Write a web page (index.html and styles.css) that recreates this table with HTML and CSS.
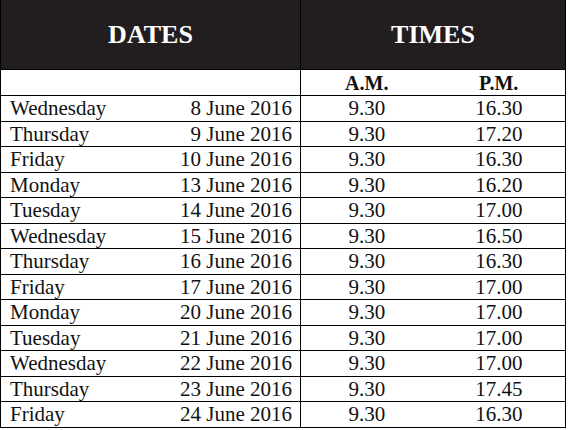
FILE: index.html
```html
<!DOCTYPE html>
<html lang="en">
<head>
<meta charset="utf-8">
<title>Dates and Times</title>
<link rel="stylesheet" href="styles.css">
</head>
<body>
<table class="schedule">
  <colgroup>
    <col class="c-day">
    <col class="c-date">
    <col class="c-am">
    <col class="c-pm">
  </colgroup>
  <thead>
    <tr class="head">
      <th colspan="2">DATES</th>
      <th colspan="2">TIMES</th>
    </tr>
    <tr class="sub">
      <th colspan="2" class="sub-blank"></th>
      <th>A.M.</th>
      <th class="sub-pm">P.M.</th>
    </tr>
  </thead>
  <tbody>
    <tr><td class="day">Wednesday</td><td class="date">8 June 2016</td><td class="t">9.30</td><td class="t">16.30</td></tr>
    <tr><td class="day">Thursday</td><td class="date">9 June 2016</td><td class="t">9.30</td><td class="t">17.20</td></tr>
    <tr><td class="day">Friday</td><td class="date">10 June 2016</td><td class="t">9.30</td><td class="t">16.30</td></tr>
    <tr><td class="day">Monday</td><td class="date">13 June 2016</td><td class="t">9.30</td><td class="t">16.20</td></tr>
    <tr><td class="day">Tuesday</td><td class="date">14 June 2016</td><td class="t">9.30</td><td class="t">17.00</td></tr>
    <tr><td class="day">Wednesday</td><td class="date">15 June 2016</td><td class="t">9.30</td><td class="t">16.50</td></tr>
    <tr><td class="day">Thursday</td><td class="date">16 June 2016</td><td class="t">9.30</td><td class="t">16.30</td></tr>
    <tr><td class="day">Friday</td><td class="date">17 June 2016</td><td class="t">9.30</td><td class="t">17.00</td></tr>
    <tr><td class="day">Monday</td><td class="date">20 June 2016</td><td class="t">9.30</td><td class="t">17.00</td></tr>
    <tr><td class="day">Tuesday</td><td class="date">21 June 2016</td><td class="t">9.30</td><td class="t">17.00</td></tr>
    <tr><td class="day">Wednesday</td><td class="date">22 June 2016</td><td class="t">9.30</td><td class="t">17.00</td></tr>
    <tr><td class="day">Thursday</td><td class="date">23 June 2016</td><td class="t">9.30</td><td class="t">17.45</td></tr>
    <tr><td class="day">Friday</td><td class="date">24 June 2016</td><td class="t">9.30</td><td class="t">16.30</td></tr>
  </tbody>
</table>
</body>
</html>
```
FILE: styles.css
```css
html, body {
  margin: 0;
  padding: 0;
  background: #ffffff;
}

.schedule {
  border-collapse: collapse;
  table-layout: fixed;
  width: 565px;
  font-family: "Liberation Serif", "Times New Roman", serif;
  color: #111111;
}

.c-day { width: 150px; }
.c-date { width: 150px; }
.c-am { width: 132px; }
.c-pm { width: 133px; }

.schedule th,
.schedule td {
  padding: 0;
  border-top: 1px solid #000000;
  border-bottom: 1px solid #000000;
}

.schedule .head th {
  height: 69px;
  background: #221e1f;
  color: #ffffff;
  font-size: 26px;
  font-weight: bold;
  text-align: center;
  vertical-align: middle;
  border: 1px solid #000000;
  border-top: none;
}

.schedule .sub th {
  height: 25px;
  font-size: 20px;
  font-weight: bold;
  text-align: center;
  vertical-align: middle;
  line-height: 24px;
}

.schedule .sub .sub-blank {
  border-left: 1px solid #000000;
  border-right: 1px solid #000000;
}

.schedule .sub .sub-pm {
  border-right: 1px solid #000000;
}

.schedule td {
  height: 24.5px;
  font-size: 21px;
  line-height: 24px;
  vertical-align: middle;
}

.schedule .day {
  text-align: left;
  padding-left: 9px;
  border-left: 1px solid #000000;
}

.schedule .date {
  text-align: right;
  padding-right: 8px;
  border-right: 1px solid #000000;
}

.schedule .t {
  text-align: center;
}

.schedule .t:last-child {
  border-right: 1px solid #000000;
}
```
